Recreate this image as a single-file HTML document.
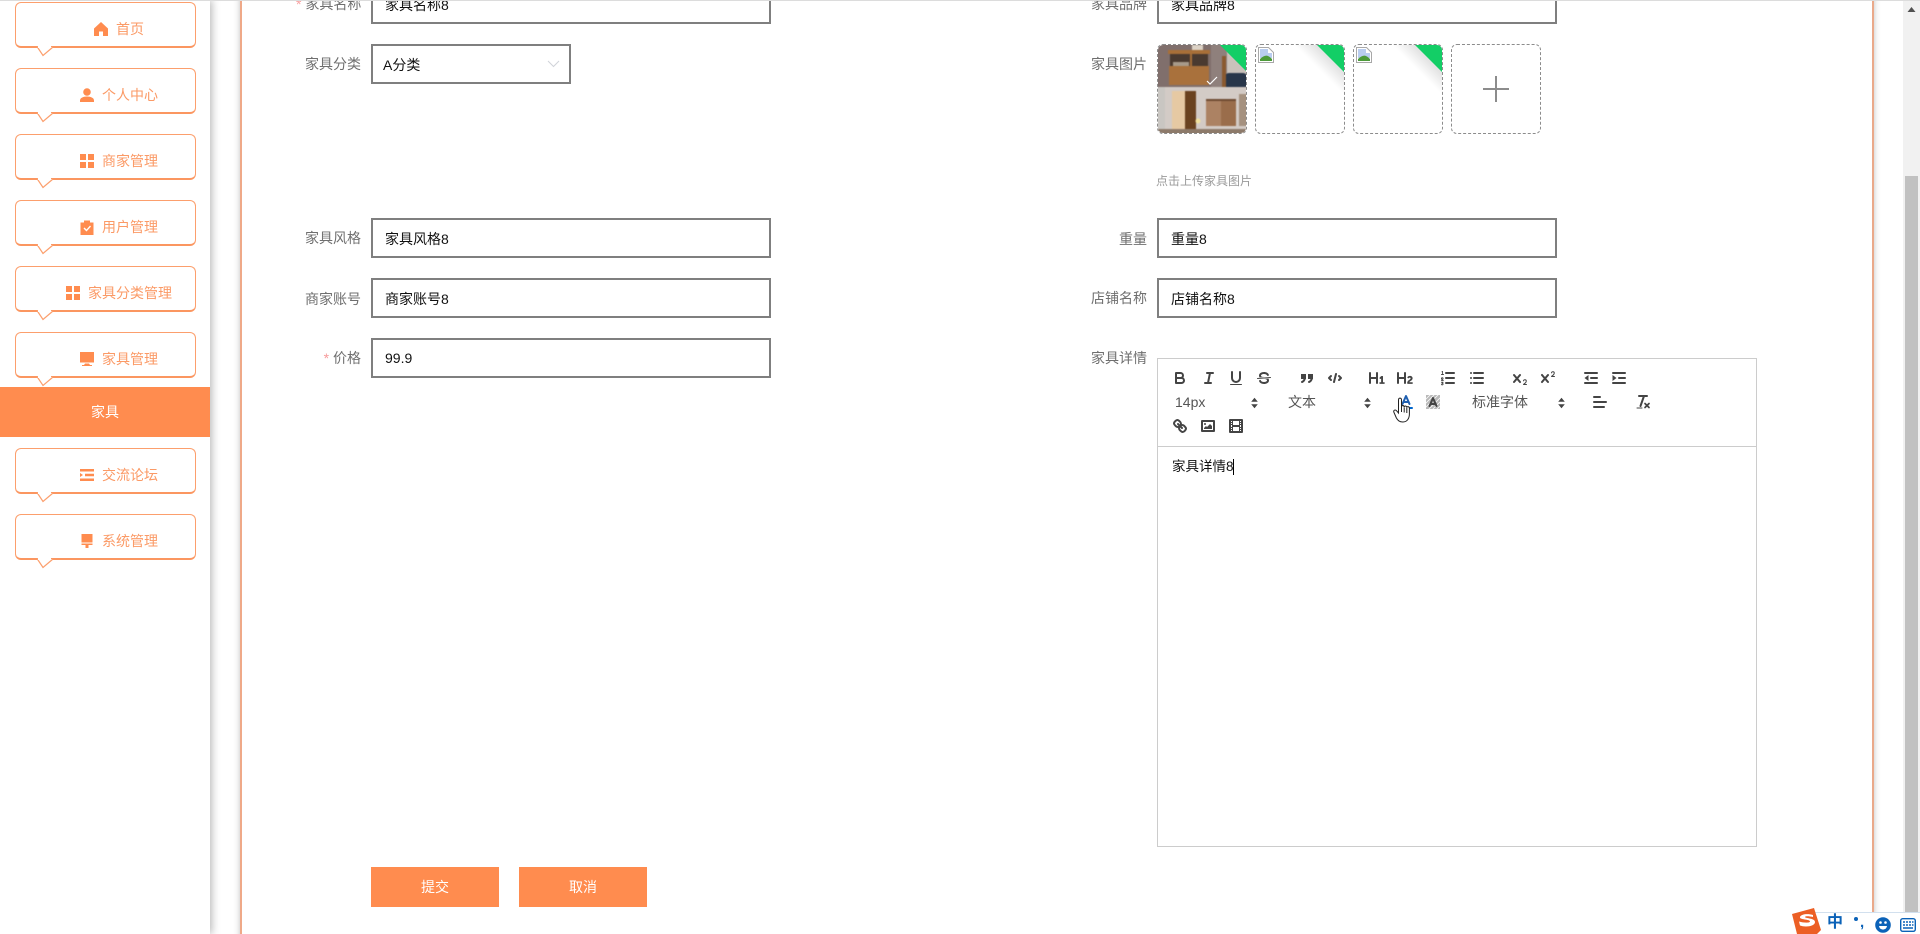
<!DOCTYPE html>
<html lang="zh"><head><meta charset="utf-8"><title>家具</title>
<style>
html,body{margin:0;padding:0;width:1920px;height:934px;overflow:hidden;background:#fff}
body{position:relative;font-family:"Liberation Sans","Noto Sans CJK SC",sans-serif;font-size:14px;color:#000}
.a{position:absolute}
#side{position:absolute;left:0;top:0;width:210px;height:934px;background:#fff;box-shadow:2px 0 8px rgba(0,0,0,.28)}
#main{position:absolute;left:240px;top:-4px;width:1634px;height:950px;background:#fff;border-left:2px solid #efa988;border-right:2px solid #eaa98a;box-shadow:0 0 6px rgba(0,0,0,.25);box-sizing:border-box}
.n{position:absolute;left:15px;width:181px;height:46px;box-sizing:border-box;border:1px solid #fc9f6d;border-bottom:2px solid #fb9660;border-radius:6px;background:#fff}
.tip{position:absolute;left:20px;top:42px}
.nt{position:absolute;height:20px;line-height:20px;color:#fb9a66;font-size:14px;white-space:nowrap}
.ni{position:absolute;width:14px;height:14px}
.lb{position:absolute;right:0;height:20px;line-height:20px;color:#6f6f6f;font-size:14px;white-space:nowrap;text-align:right}
.in{position:absolute;box-sizing:border-box;width:400px;height:40px;border:2px solid #7f7f7f;background:#fff;line-height:38px;padding-left:12px;font-size:14px;color:#111}
.th{position:absolute;top:44px;width:90px;height:90px;box-sizing:border-box;border:1px dashed #8c8c8c;border-radius:6px;overflow:hidden;background:#fff}
.ic{position:absolute;width:18px;height:18px;fill:none;stroke:#444;stroke-width:2;stroke-linecap:round;stroke-linejoin:round}
.ic .f{fill:#444;stroke:none}
.ic .t{stroke-width:1}
.pk{position:absolute;height:20px;line-height:20px;font-size:14px;color:#555;white-space:nowrap}
.ar{position:absolute;width:7px;height:12px}
.btn{position:absolute;top:867px;width:128px;height:40px;background:#ff8c4f;color:#fff;text-align:center;line-height:40px;font-size:14px}
.fade{position:absolute;right:0;top:0;width:56px;height:56px;background:linear-gradient(225deg,#e4e4e4 26%,rgba(255,255,255,0) 44%)}
</style></head><body>

<div id="main"></div>
<div class="a" style="left:0;top:0;width:1920px;height:1px;background:#dcdcdc;z-index:5"></div>

<!-- form left -->
<div class="lb" style="left:296px;top:-6px;width:65px"><span style="color:#f8a0a0">*</span> 家具名称</div>
<div class="in" style="left:371px;top:-16px">家具名称8</div>
<div class="lb" style="left:296px;top:54px;width:65px">家具分类</div>
<div class="in" style="left:371px;top:44px;width:200px;padding-left:10px">A分类</div>
<svg class="a" style="left:547px;top:60px" width="13" height="8" viewBox="0 0 13 8"><path d="M1 1l5.500 5.500L12 1" fill="none" stroke="#d0d3d9" stroke-width="1"/></svg>
<div class="lb" style="left:296px;top:228px;width:65px">家具风格</div>
<div class="in" style="left:371px;top:218px">家具风格8</div>
<div class="lb" style="left:296px;top:289px;width:65px">商家账号</div>
<div class="in" style="left:371px;top:278px">商家账号8</div>
<div class="lb" style="left:296px;top:348px;width:65px"><span style="color:#f79a9a">*</span> 价格</div>
<div class="in" style="left:371px;top:338px;line-height:36px">99.9</div>

<!-- form right -->
<div class="lb" style="left:1080px;top:-6px;width:67px">家具品牌</div>
<div class="in" style="left:1157px;top:-16px">家具品牌8</div>
<div class="lb" style="left:1080px;top:54px;width:67px">家具图片</div>

<div class="th" style="left:1157px">
<svg width="90" height="90" viewBox="0 0 90 90" style="display:block;margin:-1px;filter:blur(.5px)">
<rect width="90" height="45" fill="#806f6c"/>
<rect x="54" y="0" width="16" height="45" fill="#8f807c"/>
<rect x="70" y="0" width="20" height="30" fill="#c9c2bb"/>
<rect x="68" y="29" width="22" height="15" rx="4" fill="#28364a"/>
<rect x="65" y="12" width="4" height="32" fill="#8a5a30"/>
<rect x="11" y="6" width="42" height="4" fill="#a86f38"/>
<rect x="13" y="10" width="38" height="16" fill="#4a3a30"/>
<rect x="33" y="10" width="2" height="14" fill="#a86f38"/>
<rect x="16" y="18" width="16" height="6" fill="#a79a8a"/>
<rect x="35" y="1" width="11" height="5" fill="#dcd2c6"/>
<rect x="12" y="22" width="40" height="19" fill="#a9713c"/>
<rect x="0" y="43" width="90" height="47" fill="#d3cbc6"/>
<rect x="0" y="43" width="8" height="47" fill="#c9c6c2"/>
<rect x="15" y="47" width="13" height="38" fill="#e6c9a3"/>
<rect x="28" y="47" width="11" height="38" fill="#6a421f"/>
<rect x="49" y="57" width="15" height="25" fill="#ac8263"/>
<rect x="64" y="57" width="15" height="25" fill="#9a6d4b"/>
<rect x="49" y="55" width="30" height="2" fill="#6e4a32"/>
<rect x="82" y="50" width="8" height="32" fill="#a5917f"/>
<circle cx="41" cy="77" r="2.500" fill="#f1e2a0"/>
<rect x="0" y="85" width="90" height="5" fill="#8d7a6a"/>
</svg>
<svg class="a" style="left:60px;top:-1px" width="30" height="45" viewBox="0 0 30 45"><polygon points="1,0 30,0 30,29" fill="#13ce66"/></svg>
<svg class="a" style="left:47px;top:30px" width="14" height="12" viewBox="0 0 14 12"><path d="M2 6l3 3 7-7" fill="none" stroke="#fff" stroke-width="1.200"/></svg>
</div>

<div class="th" style="left:1255px">
<div class="fade"></div>
<svg class="a" style="left:2px;top:2px" width="16" height="16" viewBox="0 0 16 16"><path d="M.5.500h10l5 5v10H.5z" fill="#fff" stroke="#a8a8a8"/><path d="M2 2h8v4h4v5H2z" fill="#b9cdf0"/><path d="M2 14v-2c3-3 6-4 8-3s3 2 4 3v2z" fill="#4d9b3a"/></svg>
<svg class="a" style="right:-1px;top:-1px" width="29" height="29" viewBox="0 0 29 29"><polygon points="0,0 29,0 29,29" fill="#13ce66"/></svg>
</div>

<div class="th" style="left:1353px">
<div class="fade"></div>
<svg class="a" style="left:2px;top:2px" width="16" height="16" viewBox="0 0 16 16"><path d="M.5.500h10l5 5v10H.5z" fill="#fff" stroke="#a8a8a8"/><path d="M2 2h8v4h4v5H2z" fill="#b9cdf0"/><path d="M2 14v-2c3-3 6-4 8-3s3 2 4 3v2z" fill="#4d9b3a"/></svg>
<svg class="a" style="right:-1px;top:-1px" width="29" height="29" viewBox="0 0 29 29"><polygon points="0,0 29,0 29,29" fill="#13ce66"/></svg>
</div>

<div class="th" style="left:1451px">
<div class="a" style="left:31px;top:43px;width:26px;height:2px;background:#8c8c8c"></div>
<div class="a" style="left:43px;top:31px;width:2px;height:26px;background:#8c8c8c"></div>
</div>

<div class="a" style="left:1156px;top:172px;height:18px;line-height:18px;font-size:12px;color:#9a9a9a;white-space:nowrap">点击上传家具图片</div>

<div class="lb" style="left:1080px;top:229px;width:67px">重量</div>
<div class="in" style="left:1157px;top:218px">重量8</div>
<div class="lb" style="left:1080px;top:288px;width:67px">店铺名称</div>
<div class="in" style="left:1157px;top:278px">店铺名称8</div>
<div class="lb" style="left:1080px;top:348px;width:67px">家具详情</div>

<!-- editor -->
<div class="a" style="left:1157px;top:358px;width:600px;height:489px;box-sizing:border-box;border:1px solid #ccc"></div>
<div class="a" style="left:1157px;top:446px;width:600px;height:1px;background:#ccc"></div>

<svg class="ic" style="left:1171px;top:369px" viewBox="0 0 18 18"><path d="M5,4H9.500A2.500,2.500,0,0,1,12,6.500v0A2.500,2.500,0,0,1,9.500,9H5V4Z"/><path d="M5,9h5.500A2.500,2.500,0,0,1,13,11.500v0A2.500,2.500,0,0,1,10.500,14H5V9Z"/></svg>
<svg class="ic" style="left:1200px;top:369px" viewBox="0 0 18 18"><line x1="7" x2="13" y1="4" y2="4"/><line x1="5" x2="11" y1="14" y2="14"/><line x1="8" x2="10" y1="14" y2="4"/></svg>
<svg class="ic" style="left:1227px;top:369px" viewBox="0 0 18 18"><path d="M5,3V9a4,4,0,0,0,4,4H9a4,4,0,0,0,4-4V3"/><rect class="f" height="1" rx=".5" width="12" x="3" y="15"/></svg>
<svg class="ic" style="left:1255px;top:369px" viewBox="0 0 18 18"><line class="t" x1="15.500" x2="2.500" y1="8.500" y2="9.500"/><path class="f" d="M9.007,8C6.542,7.791,6,7.519,6,6.500,6,5.792,7.283,5,9,5c1.571,0,2.765.679,2.969,1.309a1,1,0,0,0,1.900-.617C13.356,4.106,11.354,3,9,3,6.200,3,4,4.538,4,6.500a3.200,3.200,0,0,0,.500,1.843Z"/><path class="f" d="M8.984,10C11.457,10.208,12,10.479,12,11.500c0,.708-1.283,1.500-3,1.500-1.571,0-2.765-.679-2.969-1.309a1,1,0,1,0-1.900.617C4.644,13.894,6.646,15,9,15c2.800,0,5-1.538,5-3.500a3.200,3.200,0,0,0-.500-1.843Z"/></svg>
<svg class="ic" style="left:1298px;top:369px" viewBox="0 0 18 18"><rect class="f" height="5" width="5" x="3" y="5"/><rect class="f" height="5" width="5" x="10" y="5"/><path d="M7,8c0,4.031-3,5-3,5"/><path d="M14,8c0,4.031-3,5-3,5"/></svg>
<svg class="ic" style="left:1326px;top:369px" viewBox="0 0 18 18"><polyline points="5 7 3 9 5 11"/><polyline points="13 7 15 9 13 11"/><line x1="10" x2="8" y1="5" y2="13"/></svg>
<svg class="ic" style="left:1368px;top:369px" viewBox="0 0 18 18"><path class="f" d="M10,4V14a1,1,0,0,1-2,0V10H3v4a1,1,0,0,1-2,0V4A1,1,0,0,1,3,4V8H8V4a1,1,0,0,1,2,0Zm6.068,9.209H14.990V7.599a.541.541,0,0,0-.605-.605h-.627a1.011,1.011,0,0,0-.748.297L11.645,8.566a.544.544,0,0,0-.022.858l.286.308a.539.539,0,0,0,.847.033l.099-.088a1.214,1.214,0,0,0,.242-.353h.022s-.011.309-.011.605V13.209H12.041a.541.541,0,0,0-.605.605v.439a.541.541,0,0,0,.605.605h4.027a.541.541,0,0,0,.605-.605v-.439A.541.541,0,0,0,16.068,13.209Z"/></svg>
<svg class="ic" style="left:1396px;top:369px" viewBox="0 0 18 18"><path class="f" d="M16.740,13.814v.439a.541.541,0,0,1-.605.605H11.855a.584.584,0,0,1-.649-.605V14.013c0-2.905,3.399-3.422,3.399-4.555a.777.777,0,0,0-.847-.781,1.177,1.177,0,0,0-.836.385c-.275.264-.561.374-.858.132l-.429-.341c-.308-.242-.385-.518-.154-.814a2.972,2.972,0,0,1,2.454-1.177,2.454,2.454,0,0,1,2.684,2.409c0,2.453-3.179,2.927-3.278,3.938h2.794A.541.541,0,0,1,16.740,13.814ZM9,3A1,1,0,0,0,8,4V8H3V4A1,1,0,0,0,1,4V14a1,1,0,0,0,2,0V10H8v4a1,1,0,0,0,2,0V4A1,1,0,0,0,9,3Z"/></svg>
<svg class="ic" style="left:1439px;top:369px" viewBox="0 0 18 18"><line x1="7" x2="15" y1="4" y2="4"/><line x1="7" x2="15" y1="9" y2="9"/><line x1="7" x2="15" y1="14" y2="14"/><line class="t" x1="2.500" x2="4.500" y1="5.500" y2="5.500"/><path class="f" d="M3.500,6A.5.5,0,0,0,4,5.500V2.500a.5.5,0,0,0-.8-.4l-.8.6.6.7.2-.1V5.500A.5.5,0,0,0,3.500,6Z"/><path class="t" d="M2.500,9.700a.8.8,0,0,1,1.600-.2c0,.6-1.600,1.200-1.600,1.900h1.800"/><path class="t" d="M2.500,13.300h1.500l-.9,1h.2a.8.8,0,1,1-.8,1"/></svg>
<svg class="ic" style="left:1468px;top:369px" viewBox="0 0 18 18"><line x1="6" x2="15" y1="4" y2="4"/><line x1="6" x2="15" y1="9" y2="9"/><line x1="6" x2="15" y1="14" y2="14"/><line x1="3" x2="3" y1="4" y2="4"/><line x1="3" x2="3" y1="9" y2="9"/><line x1="3" x2="3" y1="14" y2="14"/></svg>
<svg class="ic" style="left:1511px;top:369px" viewBox="0 0 18 18"><path class="f" d="M15.500,15H13.861a3.858,3.858,0,0,0,1.914-2.975,1.800,1.800,0,0,0-1.600-1.751A1.921,1.921,0,0,0,12.021,11.700a.5.5,0,1,0,.957.291.914.914,0,0,1,1.053-.725.810.810,0,0,1,.744.762c0,1.076-1.170,1.870-1.940,2.431A1.456,1.456,0,0,0,12,15.500a.5.5,0,0,0,.5.5h3A.5.5,0,0,0,15.500,15Z"/><path class="f" d="M9.650,5.241a1,1,0,0,0-1.409.108L6,7.964,3.759,5.349A1,1,0,0,0,2.241,6.649L4.684,9.500,2.241,12.350A1,1,0,0,0,3.759,13.650L6,11.036,8.241,13.650a1,1,0,1,0,1.518-1.300L7.316,9.500,9.759,6.651A1,1,0,0,0,9.650,5.241Z"/></svg>
<svg class="ic" style="left:1539px;top:369px" viewBox="0 0 18 18"><path class="f" d="M15.500,7H13.861a4.015,4.015,0,0,0,1.914-2.975,1.800,1.800,0,0,0-1.600-1.751A1.922,1.922,0,0,0,12.021,3.700a.5.5,0,1,0,.957.291.917.917,0,0,1,1.053-.725.810.810,0,0,1,.744.762c0,1.077-1.164,1.925-1.934,2.486A1.423,1.423,0,0,0,12,7.500a.5.5,0,0,0,.5.5h3A.5.5,0,0,0,15.500,7Z"/><path class="f" d="M9.651,5.241a1,1,0,0,0-1.410.108L6,7.964,3.759,5.349a1,1,0,1,0-1.519,1.300L4.683,9.500,2.241,12.350a1,1,0,1,0,1.519,1.300L6,11.036,8.241,13.650a1,1,0,0,0,1.519-1.300L7.317,9.500,9.759,6.651A1,1,0,0,0,9.651,5.241Z"/></svg>
<svg class="ic" style="left:1582px;top:369px" viewBox="0 0 18 18"><line x1="3" x2="15" y1="14" y2="14"/><line x1="3" x2="15" y1="4" y2="4"/><line x1="9" x2="15" y1="9" y2="9"/><polygon class="f" points="6.500 6 6.500 12 2.500 9"/></svg>
<svg class="ic" style="left:1610px;top:369px" viewBox="0 0 18 18"><line x1="3" x2="15" y1="14" y2="14"/><line x1="3" x2="15" y1="4" y2="4"/><line x1="9" x2="15" y1="9" y2="9"/><polygon class="f" points="2.500 6 2.500 12 6.500 9"/></svg>

<!-- row 2 -->
<div class="pk" style="left:1175px;top:392px">14px</div>
<svg class="ar" style="left:1250.500px;top:397px" viewBox="0 0 7 12"><path d="M3.500 .8l3.300 4H.2zM3.500 11.200l3.300-4H.2z" fill="#444"/></svg>
<div class="pk" style="left:1288px;top:392px">文本</div>
<svg class="ar" style="left:1363.500px;top:397px" viewBox="0 0 7 12"><path d="M3.500 .8l3.300 4H.2zM3.500 11.200l3.300-4H.2z" fill="#444"/></svg>
<svg class="ic" style="left:1397px;top:393px" viewBox="0 0 18 18"><line x1="3" x2="15" y1="15" y2="15" style="stroke:#06c"/><polyline points="5.500 11 9 3 12.500 11" style="stroke:#1f5fb0"/><line x1="11.630" x2="6.380" y1="9" y2="9" style="stroke:#1f5fb0"/></svg>
<svg class="ic" style="left:1424px;top:393px" viewBox="0 0 18 18"><rect x="2" y="2" width="14" height="14" style="fill:#b9b9b9;stroke:none"/><g style="stroke:#fff;stroke-width:.8"><line x1="2" y1="6" x2="6" y2="2"/><line x1="2" y1="10" x2="10" y2="2"/><line x1="2" y1="14" x2="14" y2="2"/><line x1="5" y1="16" x2="16" y2="5"/><line x1="9" y1="16" x2="16" y2="9"/><line x1="13" y1="16" x2="16" y2="13"/></g><polyline points="5.500 13 9 5 12.500 13"/><line x1="11.630" x2="6.380" y1="11" y2="11"/></svg>
<div class="pk" style="left:1472px;top:392px">标准字体</div>
<svg class="ar" style="left:1557.500px;top:397px" viewBox="0 0 7 12"><path d="M3.500 .8l3.300 4H.2zM3.500 11.200l3.300-4H.2z" fill="#444"/></svg>
<svg class="ic" style="left:1591px;top:393px" viewBox="0 0 18 18"><line x1="3" x2="15" y1="9" y2="9"/><line x1="3" x2="13" y1="14" y2="14"/><line x1="3" x2="9" y1="4" y2="4"/></svg>
<svg class="ic" style="left:1634px;top:393px" viewBox="0 0 18 18"><line x1="5" x2="13" y1="3" y2="3"/><line x1="3" x2="8" y1="15" y2="15" class="t"/><line x1="10" x2="6.500" y1="3" y2="13"/><line style="stroke-width:1.700" x1="11" x2="15" y1="10.500" y2="14.500"/><line style="stroke-width:1.700" x1="15" x2="11" y1="10.500" y2="14.500"/></svg>

<!-- row 3 -->
<svg class="ic" style="left:1171px;top:417px" viewBox="0 0 18 18"><line x1="7" x2="11" y1="7" y2="11"/><path d="M8.900,4.577a3.476,3.476,0,0,1,.36,4.679A3.476,3.476,0,0,1,4.577,8.900C3.185,7.500,2.035,6.400,4.217,4.217S7.500,3.185,8.900,4.577Z"/><path d="M13.423,9.100a3.476,3.476,0,0,0-4.679-.36,3.476,3.476,0,0,0,.36,4.679c1.392,1.392,2.500,2.542,4.679.36S14.815,10.500,13.423,9.100Z"/></svg>
<svg class="ic" style="left:1199px;top:417px" viewBox="0 0 18 18"><rect height="10" width="12" x="3" y="4"/><circle class="f" cx="6" cy="7" r="1"/><polyline class="f" points="5 12 5 11 7 9 8 10 11 7 13 9 13 12 5 12"/></svg>
<svg class="ic" style="left:1227px;top:417px" viewBox="0 0 18 18"><rect height="12" width="12" x="3" y="3"/><rect class="f" height="12" width="1" x="5" y="3"/><rect class="f" height="12" width="1" x="12" y="3"/><rect class="f" height="2" width="8" x="5" y="8"/><rect class="f" height="1" width="3" x="3" y="5"/><rect class="f" height="1" width="3" x="3" y="7"/><rect class="f" height="1" width="3" x="3" y="10"/><rect class="f" height="1" width="3" x="3" y="12"/><rect class="f" height="1" width="3" x="12" y="5"/><rect class="f" height="1" width="3" x="12" y="7"/><rect class="f" height="1" width="3" x="12" y="10"/><rect class="f" height="1" width="3" x="12" y="12"/></svg>

<!-- hand cursor -->
<svg class="a" style="left:1393px;top:397px" width="18" height="27" viewBox="0 0 18 27"><path d="M5.500 3c0-2.500 3-2.500 3 0v7c0-2 2.700-2 2.700.3 0-1.800 2.600-1.800 2.600.4 0-1.600 2.600-1.500 2.600.5v5.800c0 4-2 8-6.500 8-3.500 0-5-1.500-6.500-4L1 15.500c-1-2 1-3.400 2.500-1.800l2 2.300z" fill="#fff" stroke="#222" stroke-width="1"/><path d="M8.500 10v5M11.200 10.500v5M13.800 11v5" stroke="#222" stroke-width="1" fill="none"/></svg>

<div class="a" style="left:1172px;top:457px;height:20px;line-height:20px;font-size:13.500px;color:#111;white-space:nowrap">家具详情8</div>
<div class="a" style="left:1233px;top:459px;width:1px;height:16px;background:#000"></div>

<div class="btn" style="left:371px">提交</div>
<div class="btn" style="left:519px">取消</div>

<!-- sidebar -->
<div id="side">
  <div class="n" style="top:2px"><svg class="tip" width="18" height="12" viewBox="0 0 18 12"><path d="M1 1.500L7 10.500L17 2" fill="#fff" stroke="#fc9f6d" stroke-width="1.200"/><rect x="2" y="0" width="13" height="3" fill="#fff"/></svg></div>
  <svg class="ni" style="left:94px;top:22px" viewBox="0 0 14 14"><path d="M7 0L14 6.500V14H9V9.500H5V14H0V6.500z" fill="#ff8c4f"/></svg>
  <div class="nt" style="left:116px;top:19px">首页</div>

  <div class="n" style="top:68px"><svg class="tip" width="18" height="12" viewBox="0 0 18 12"><path d="M1 1.500L7 10.500L17 2" fill="#fff" stroke="#fc9f6d" stroke-width="1.200"/><rect x="2" y="0" width="13" height="3" fill="#fff"/></svg></div>
  <svg class="ni" style="left:80px;top:88px" viewBox="0 0 14 14"><circle cx="7" cy="4" r="3.800" fill="#ff8c4f"/><path d="M0 14v-1.500C0 10 3 8.500 7 8.500s7 1.500 7 4V14z" fill="#ff8c4f"/></svg>
  <div class="nt" style="left:102px;top:85px">个人中心</div>

  <div class="n" style="top:134px"><svg class="tip" width="18" height="12" viewBox="0 0 18 12"><path d="M1 1.500L7 10.500L17 2" fill="#fff" stroke="#fc9f6d" stroke-width="1.200"/><rect x="2" y="0" width="13" height="3" fill="#fff"/></svg></div>
  <svg class="ni" style="left:80px;top:154px" viewBox="0 0 14 14"><path d="M0 0h6v6H0zM8 0h6v6H8zM0 8h6v6H0zM8 8h6v6H8z" fill="#ff8c4f"/></svg>
  <div class="nt" style="left:102px;top:151px">商家管理</div>

  <div class="n" style="top:200px"><svg class="tip" width="18" height="12" viewBox="0 0 18 12"><path d="M1 1.500L7 10.500L17 2" fill="#fff" stroke="#fc9f6d" stroke-width="1.200"/><rect x="2" y="0" width="13" height="3" fill="#fff"/></svg></div>
  <svg class="ni" style="left:80px;top:220px;height:15px" viewBox="0 0 14 15"><path fill-rule="evenodd" d="M.5 2.500h3.500V.5h6v2h3.500V15H.5zM3.500 8.500l3 3 4.500-5-1-1-3.500 4-2-2z" fill="#ff8c4f"/></svg>
  <div class="nt" style="left:102px;top:217px">用户管理</div>

  <div class="n" style="top:266px"><svg class="tip" width="18" height="12" viewBox="0 0 18 12"><path d="M1 1.500L7 10.500L17 2" fill="#fff" stroke="#fc9f6d" stroke-width="1.200"/><rect x="2" y="0" width="13" height="3" fill="#fff"/></svg></div>
  <svg class="ni" style="left:66px;top:286px" viewBox="0 0 14 14"><path d="M0 0h6v6H0zM8 0h6v6H8zM0 8h6v6H0zM8 8h6v6H8z" fill="#ff8c4f"/></svg>
  <div class="nt" style="left:88px;top:283px">家具分类管理</div>

  <div class="n" style="top:332px"><svg class="tip" width="18" height="12" viewBox="0 0 18 12"><path d="M1 1.500L7 10.500L17 2" fill="#fff" stroke="#fc9f6d" stroke-width="1.200"/><rect x="2" y="0" width="13" height="3" fill="#fff"/></svg></div>
  <svg class="ni" style="left:80px;top:352px" viewBox="0 0 14 14"><path d="M0 0h14v10.500H0zM5 11.500h4l1 1.500H4zM2 13h10v1H2z" fill="#ff8c4f"/></svg>
  <div class="nt" style="left:102px;top:349px">家具管理</div>

  <div class="a" style="left:0;top:387px;width:210px;height:50px;background:#ff8c4f;color:#fff;text-align:center;line-height:50px;font-size:14px">家具</div>

  <div class="n" style="top:448px"><svg class="tip" width="18" height="12" viewBox="0 0 18 12"><path d="M1 1.500L7 10.500L17 2" fill="#fff" stroke="#fc9f6d" stroke-width="1.200"/><rect x="2" y="0" width="13" height="3" fill="#fff"/></svg></div>
  <svg class="ni" style="left:80px;top:468px" viewBox="0 0 14 14"><path d="M0 1h14v2.500H0zM5 5.700h9v2.500H5zM0 10.500h14V13H0zM0 5l3 2-3 2z" fill="#ff8c4f"/></svg>
  <div class="nt" style="left:102px;top:465px">交流论坛</div>

  <div class="n" style="top:514px"><svg class="tip" width="18" height="12" viewBox="0 0 18 12"><path d="M1 1.500L7 10.500L17 2" fill="#fff" stroke="#fc9f6d" stroke-width="1.200"/><rect x="2" y="0" width="13" height="3" fill="#fff"/></svg></div>
  <svg class="ni" style="left:80px;top:534px" viewBox="0 0 14 14"><path d="M1.500 0h11v8.500h-11zM1.500 9.500h11v1.500h-4v3h-3v-3h-4z" fill="#ff8c4f"/></svg>
  <div class="nt" style="left:102px;top:531px">系统管理</div>
</div>

<!-- scrollbar -->
<div class="a" style="left:1903px;top:1px;width:17px;height:933px;background:#f1f1f1"></div>
<svg class="a" style="left:1907px;top:6px" width="9" height="7" viewBox="0 0 9 7"><path d="M4.500 1L8.500 6H.5z" fill="#505050"/></svg>
<div class="a" style="left:1905px;top:176px;width:13px;height:758px;background:#c1c1c1"></div>

<!-- IME bar -->
<div class="a" style="left:1815px;top:912px;width:105px;height:22px;background:#fff;border-top:1px solid #d2e0ee;box-sizing:border-box"></div>
<svg class="a" style="left:1789px;top:907px" width="34" height="27" viewBox="0 0 34 27"><path d="M3 7L25 1l7 22-4 4H8z" fill="#ec5f25"/><path d="M24 8c-5-1.500-12-1-13 2-.8 3 10 2 10 4.500 0 1.500-6 1.500-11 0l1 4c5 2 15 1 15-3.500 0-4-10-3.500-10-5 0-1 4-1 8 0z" fill="#fff"/></svg>
<div class="a" style="left:1827px;top:912px;height:22px;line-height:22px;font-size:16px;font-weight:bold;color:#0b62b8">中</div>
<div class="a" style="left:1854px;top:917px;width:4px;height:4px;border-radius:2px;background:#0b62b8"></div>
<div class="a" style="left:1860px;top:912px;height:22px;line-height:22px;font-size:15px;font-weight:bold;color:#0b62b8">,</div>
<svg class="a" style="left:1875px;top:917px" width="16" height="16" viewBox="0 0 16 16"><circle cx="8" cy="8" r="7.800" fill="#0b62b8"/><circle cx="5.500" cy="5.500" r="1.300" fill="#fff"/><circle cx="10.500" cy="5.500" r="1.300" fill="#fff"/><path d="M4 9h8c-.5 2.500-2 3.500-4 3.500S4.500 11.500 4 9z" fill="#fff"/></svg>
<svg class="a" style="left:1900px;top:918px" width="16" height="14" viewBox="0 0 16 14"><rect x=".7" y=".7" width="14.600" height="12.600" rx="2" fill="#fff" stroke="#0b62b8" stroke-width="1.400"/><path d="M3 4h2M6 4h2M9 4h2M12 4h1.500M3 7h2M6 7h2M9 7h2M12 7h1.500M3 10h10" stroke="#0b62b8" stroke-width="1.600"/></svg>

</body></html>
